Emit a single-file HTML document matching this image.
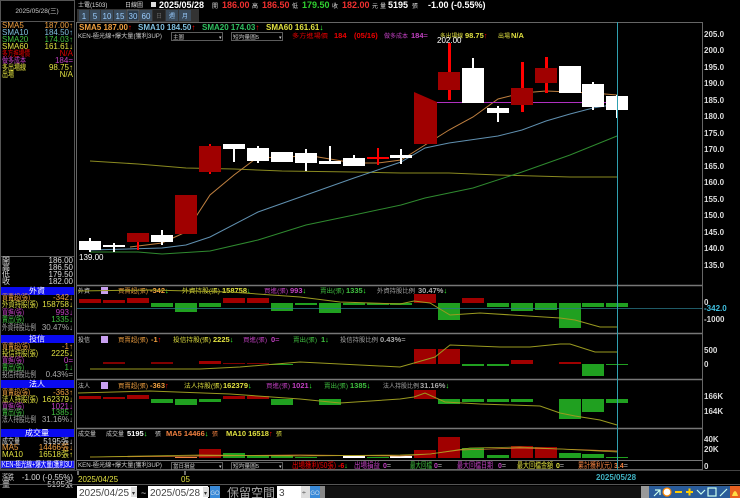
<!DOCTYPE html>
<html><head><meta charset="utf-8"><style>
body{margin:0;background:#000;width:740px;height:498px;overflow:hidden}
svg{display:block}
text{font-family:"Liberation Sans","Noto Sans CJK TC",sans-serif;font-size:8px}
.b{font-weight:bold}
.c{font-size:6px}
.v{font-size:7.5px;font-weight:bold}
</style></head><body>
<svg width="740" height="498" viewBox="0 0 740 498" xmlns="http://www.w3.org/2000/svg">
<rect width="740" height="498" fill="#000"/>
<!-- left panel frame -->
<rect x="0.5" y="0.5" width="74" height="469" fill="none" stroke="#555"/>
<line x1="0" y1="21.5" x2="75" y2="21.5" stroke="#555"/>
<text x="37" y="13" fill="#ccc" text-anchor="middle" style="font-size:6.5px">2025/05/28(三)</text>
<g style="font-size:6.5px">
<text x="2" y="28" fill="#f0a040">SMA5</text><text x="73" y="28" fill="#f0a040" text-anchor="end">187.00↑</text>
<text x="2" y="35" fill="#80c0e0">SMA10</text><text x="73" y="35" fill="#80c0e0" text-anchor="end">184.50↑</text>
<text x="2" y="42" fill="#40c040">SMA20</text><text x="73" y="42" fill="#40c040" text-anchor="end">174.03↑</text>
<text x="2" y="49" fill="#e0e040">SMA60</text><text x="73" y="49" fill="#e0e040" text-anchor="end">161.61↓</text>
<text x="2" y="56" fill="#e00000" textLength="28" lengthAdjust="spacingAndGlyphs">多方進場價</text><text x="73" y="56" fill="#e00000" text-anchor="end">N/A</text>
<text x="2" y="63" fill="#c040c0" textLength="24" lengthAdjust="spacingAndGlyphs">做多成本</text><text x="73" y="63" fill="#c040c0" text-anchor="end">184=</text>
<text x="2" y="70" fill="#e0e040" textLength="24" lengthAdjust="spacingAndGlyphs">多出場線</text><text x="73" y="70" fill="#e0e040" text-anchor="end">98.75↑</text>
<text x="2" y="77" fill="#e0e040" textLength="12" lengthAdjust="spacingAndGlyphs">出場</text><text x="73" y="77" fill="#e0e040" text-anchor="end">N/A</text>
</g>
<line x1="0" y1="256.5" x2="75" y2="256.5" stroke="#555"/>
<g style="font-size:6.5px" fill="#ddd">
<text x="2" y="263">開</text><text x="73" y="263" text-anchor="end">186.00</text>
<text x="2" y="270">高</text><text x="73" y="270" text-anchor="end">186.50</text>
<text x="2" y="277">低</text><text x="73" y="277" text-anchor="end">179.50</text>
<text x="2" y="284">收</text><text x="73" y="284" text-anchor="end">182.00</text>
</g>
<g style="font-size:6px">
<rect x="1" y="287" width="73" height="8" fill="#0a0af0"/>
<text x="37" y="293.5" fill="#fff" text-anchor="middle">外資</text>
<text x="2" y="300" fill="#f0a040" textLength="28" lengthAdjust="spacingAndGlyphs">買賣超(張)</text><text x="73" y="300" fill="#f0a040" text-anchor="end">-342↓</text>
<text x="2" y="307" fill="#e0e040" textLength="36" lengthAdjust="spacingAndGlyphs">外資持股(張)</text><text x="73" y="307" fill="#e0e040" text-anchor="end">158758↓</text>
<text x="2" y="315" fill="#c040c0" textLength="22" lengthAdjust="spacingAndGlyphs">買進(張)</text><text x="73" y="315" fill="#c040c0" text-anchor="end">993↓</text>
<text x="2" y="322" fill="#40c040" textLength="22" lengthAdjust="spacingAndGlyphs">賣出(張)</text><text x="73" y="322" fill="#40c040" text-anchor="end">1335↓</text>
<text x="2" y="330" fill="#aaa" textLength="34" lengthAdjust="spacingAndGlyphs">外資持股比例</text><text x="73" y="330" fill="#aaa" text-anchor="end">30.47%↓</text>

<rect x="1" y="335" width="73" height="8" fill="#0a0af0"/>
<text x="37" y="341.5" fill="#fff" text-anchor="middle">投信</text>
<text x="2" y="349" fill="#f0a040" textLength="28" lengthAdjust="spacingAndGlyphs">買賣超(張)</text><text x="73" y="349" fill="#f0a040" text-anchor="end">-1↑</text>
<text x="2" y="356" fill="#e0e040" textLength="36" lengthAdjust="spacingAndGlyphs">投信持股(張)</text><text x="73" y="356" fill="#e0e040" text-anchor="end">2225↓</text>
<text x="2" y="363" fill="#c040c0" textLength="22" lengthAdjust="spacingAndGlyphs">買進(張)</text><text x="73" y="363" fill="#c040c0" text-anchor="end">0=</text>
<text x="2" y="370" fill="#40c040" textLength="22" lengthAdjust="spacingAndGlyphs">賣出(張)</text><text x="73" y="370" fill="#40c040" text-anchor="end">1↓</text>
<text x="2" y="377" fill="#aaa" textLength="34" lengthAdjust="spacingAndGlyphs">投信持股比例</text><text x="73" y="377" fill="#aaa" text-anchor="end">0.43%=</text>

<rect x="1" y="380" width="73" height="8" fill="#0a0af0"/>
<text x="37" y="386.5" fill="#fff" text-anchor="middle">法人</text>
<text x="2" y="395" fill="#f0a040" textLength="28" lengthAdjust="spacingAndGlyphs">買賣超(張)</text><text x="73" y="395" fill="#f0a040" text-anchor="end">-363↑</text>
<text x="2" y="402" fill="#e0e040" textLength="36" lengthAdjust="spacingAndGlyphs">法人持股(張)</text><text x="73" y="402" fill="#e0e040" text-anchor="end">162379↓</text>
<text x="2" y="409" fill="#c040c0" textLength="22" lengthAdjust="spacingAndGlyphs">買進(張)</text><text x="73" y="409" fill="#c040c0" text-anchor="end">1021↓</text>
<text x="2" y="415" fill="#40c040" textLength="22" lengthAdjust="spacingAndGlyphs">賣出(張)</text><text x="73" y="415" fill="#40c040" text-anchor="end">1385↓</text>
<text x="2" y="422" fill="#aaa" textLength="34" lengthAdjust="spacingAndGlyphs">法人持股比例</text><text x="73" y="422" fill="#aaa" text-anchor="end">31.16%↓</text>

<rect x="1" y="429" width="73" height="8" fill="#0a0af0"/>
<text x="37" y="435.5" fill="#fff" text-anchor="middle">成交量</text>
<text x="2" y="444" fill="#ddd" textLength="18" lengthAdjust="spacingAndGlyphs">成交量</text><text x="73" y="444" fill="#ddd" text-anchor="end">5195張↓</text>
<text x="2" y="450" fill="#f0a040">MA5</text><text x="73" y="450" fill="#f0a040" text-anchor="end">14466張↓</text>
<text x="2" y="457" fill="#e0e040">MA10</text><text x="73" y="457" fill="#e0e040" text-anchor="end">16518張↑</text>
<rect x="1" y="461" width="73" height="7" fill="#0a0af0" stroke="#88f" stroke-width="0.5"/>
<text x="2" y="467" fill="#fff" textLength="70" lengthAdjust="spacingAndGlyphs">KEN-極光線+爆大量(獲利3U</text>
<text x="2" y="480" fill="#ddd" textLength="12" lengthAdjust="spacingAndGlyphs">漲跌</text><text x="73" y="480" fill="#ddd" text-anchor="end">-1.00 (-0.55%)</text>
<text x="2" y="487" fill="#ddd">量</text><text x="73" y="487" fill="#ddd" text-anchor="end">5195張</text>
</g>

<!-- top title -->
<text x="78" y="7" fill="#ddd" class="c">士電(1503)</text>
<text x="125" y="7" fill="#ddd" class="c">日線圖</text>
<rect x="151" y="2" width="5" height="5" fill="#ddd"/>
<text x="159" y="8" fill="#fff" class="b" style="font-size:9px">2025/05/28</text>
<text x="212" y="8" fill="#ddd" class="c">開</text><text x="222" y="8" fill="#f03030" class="b" style="font-size:9px">186.00</text>
<text x="252" y="8" fill="#ddd" class="c">高</text><text x="262" y="8" fill="#f03030" class="b" style="font-size:9px">186.50</text>
<text x="292" y="8" fill="#ddd" class="c">低</text><text x="302" y="8" fill="#30d030" class="b" style="font-size:9px">179.50</text>
<text x="332" y="8" fill="#ddd" class="c">收</text><text x="342" y="8" fill="#f03030" class="b" style="font-size:9px">182.00</text>
<text x="372" y="8" fill="#ddd" class="c">元</text>
<text x="380" y="8" fill="#ddd" class="c">量</text>
<text x="388" y="8" fill="#fff" class="b" style="font-size:9px">5195</text>
<text x="412" y="8" fill="#ddd" class="c">張</text>
<text x="428" y="8" fill="#fff" class="b" style="font-size:9px">-1.00 (-0.55%)</text>
<!-- buttons -->
<rect x="77" y="9" width="122" height="13" fill="#333"/>
<g style="font-size:8px" fill="#9cf">
<rect x="79" y="10" width="10" height="11" fill="#3a4a5a"/><text x="84" y="19" text-anchor="middle">1</text>
<rect x="90" y="10" width="10" height="11" fill="#3a4a5a"/><text x="95" y="19" text-anchor="middle">5</text>
<rect x="101" y="10" width="12" height="11" fill="#3a4a5a"/><text x="107" y="19" text-anchor="middle">10</text>
<rect x="114" y="10" width="12" height="11" fill="#3a4a5a"/><text x="120" y="19" text-anchor="middle">15</text>
<rect x="127" y="10" width="12" height="11" fill="#2a3a4a" stroke="#888" stroke-width="0.5"/><text x="133" y="19" text-anchor="middle">30</text>
<rect x="140" y="10" width="12" height="11" fill="#3a4a5a"/><text x="146" y="19" text-anchor="middle">60</text>
<rect x="153" y="10" width="12" height="11" fill="#222"/><text x="159" y="18" text-anchor="middle" fill="#666" class="c">日</text>
<rect x="166" y="10" width="12" height="11" fill="#3a4a5a"/><text x="172" y="18" text-anchor="middle" class="c">週</text>
<rect x="179" y="10" width="12" height="11" fill="#3a4a5a"/><text x="185" y="18" text-anchor="middle" class="c">月</text>
</g>

<!-- chart frame -->
<rect x="76.5" y="22.5" width="626" height="447" fill="none" stroke="#666"/>
<line x1="77" y1="285.5" x2="702" y2="285.5" stroke="#777" stroke-width="1.5"/>
<line x1="77" y1="333.5" x2="702" y2="333.5" stroke="#777" stroke-width="1.5"/>
<line x1="77" y1="379.5" x2="702" y2="379.5" stroke="#777" stroke-width="1.5"/>
<line x1="77" y1="428.5" x2="702" y2="428.5" stroke="#777" stroke-width="1.5"/>
<line x1="77" y1="460.5" x2="702" y2="460.5" stroke="#777" stroke-width="1"/>

<!-- main header -->
<g class="b" style="font-size:8px">
<text x="79" y="30" fill="#f0a040">SMA5 187.00<tspan fill="#f00">↑</tspan></text>
<text x="138" y="30" fill="#80c0e0">SMA10 184.50<tspan fill="#f00">↑</tspan></text>
<text x="202" y="30" fill="#30c060">SMA20 174.03<tspan fill="#f00">↑</tspan></text>
<text x="266" y="30" fill="#e0e040">SMA60 161.61<tspan fill="#3f3">↓</tspan></text>
</g>
<text x="78" y="38" fill="#ccc" class="c" textLength="84" lengthAdjust="spacingAndGlyphs">KEN-極光線+爆大量(獲利3UP)</text>
<rect x="171.5" y="32.5" width="51" height="8" fill="#000" stroke="#999" stroke-width="0.6"/>
<text x="173" y="39" fill="#ccc" style="font-size:5.5px">主圖</text><text x="219" y="39" fill="#ccc" style="font-size:5px">▾</text>
<rect x="231.5" y="32.5" width="51" height="8" fill="#000" stroke="#999" stroke-width="0.6"/>
<text x="233" y="39" fill="#ccc" style="font-size:5.5px" textLength="26" lengthAdjust="spacingAndGlyphs">短均量圖5</text><text x="279" y="39" fill="#ccc" style="font-size:5px">▾</text>
<text x="292" y="38" fill="#e00" class="c" textLength="36" lengthAdjust="spacingAndGlyphs">多方進場價</text><text x="334" y="38" fill="#e00" class="v">184</text><text x="354" y="38" fill="#e00" class="v">(05/16)</text>
<text x="384" y="38" fill="#c040c0" class="c" textLength="24" lengthAdjust="spacingAndGlyphs">做多成本</text><text x="411" y="38" fill="#c040c0" class="v">184<tspan font-weight="normal">=</tspan></text>
<text x="440" y="38" fill="#e0e040" class="c" textLength="23" lengthAdjust="spacingAndGlyphs">多出場線</text><text x="465" y="38" fill="#e0e040" class="v">98.75<tspan fill="#f00">↑</tspan></text>
<text x="498" y="38" fill="#e0e040" class="c">出場</text><text x="511" y="38" fill="#e0e040" class="v">N/A</text>

<!-- price axis -->
<g fill="#ddd" class="b" style="font-size:8px">
<text x="704" y="37">205.0</text><text x="704" y="53">200.0</text><text x="704" y="70">195.0</text>
<text x="704" y="86">190.0</text><text x="704" y="103">185.0</text><text x="704" y="119">180.0</text>
<text x="704" y="136">175.0</text><text x="704" y="152">170.0</text><text x="704" y="169">165.0</text>
<text x="704" y="185">160.0</text><text x="704" y="202">155.0</text><text x="704" y="218">150.0</text>
<text x="704" y="235">145.0</text><text x="704" y="251">140.0</text><text x="704" y="268">135.0</text>
</g>

<!-- MA lines -->
<polyline fill="none" stroke="#8a8a20" stroke-width="1" points="90,161 138,164 186,168 234,169 282,171 354,172 401,173 449,173 498,175 570,177 617,177"/>
<polyline fill="none" stroke="#2f8a2f" stroke-width="1" points="90,252 138,252 162,254 210,251 258,240 306,225 354,215 401,205 425,198 473,188 522,172 570,155 617,136"/>
<polyline fill="none" stroke="#6090b0" stroke-width="1" points="90,250 162,248 186,245 210,237 258,212 306,195 354,178 401,162 425,148 449,143 498,136 522,130 546,121 570,114 593,108 617,104"/>
<polyline fill="none" stroke="#c08040" stroke-width="1" points="130,247 162,243 186,232 210,195 234,175 258,157 282,158 306,155 330,159 354,163 378,163 401,160 425,145 449,130 473,117 498,99 522,93 546,91 570,92 593,93 617,95"/>
<line x1="437" y1="102.5" x2="617" y2="102.5" stroke="#b030c0" stroke-width="1"/>

<!-- candles -->
<g>
<rect x="89" y="238" width="2" height="14" fill="#fff"/><rect x="79" y="241" width="22" height="9" fill="#fff"/>
<rect x="113" y="243" width="2" height="9" fill="#fff"/><rect x="103" y="245" width="22" height="2" fill="#fff"/>
<rect x="137" y="233" width="2" height="17" fill="#f00"/><rect x="127" y="233" width="22" height="9" fill="#a00000"/>
<rect x="161" y="230" width="2" height="15" fill="#fff"/><rect x="151" y="235" width="22" height="7" fill="#fff"/>
<rect x="175" y="195" width="22" height="39" fill="#a00000"/>
<rect x="209" y="144" width="2" height="30" fill="#f00"/><rect x="199" y="146" width="22" height="26" fill="#a00000"/>
<rect x="233" y="144" width="2" height="18" fill="#fff"/><rect x="223" y="144" width="22" height="5" fill="#fff"/>
<rect x="257" y="146" width="2" height="17" fill="#fff"/><rect x="247" y="148" width="22" height="13" fill="#fff"/>
<rect x="271" y="152" width="22" height="10" fill="#fff"/>
<rect x="305" y="149" width="2" height="22" fill="#fff"/><rect x="295" y="153" width="22" height="10" fill="#fff"/>
<rect x="329" y="146" width="2" height="18" fill="#fff"/><rect x="319" y="161" width="22" height="3" fill="#fff"/>
<rect x="353" y="155" width="2" height="11" fill="#fff"/><rect x="343" y="158" width="22" height="8" fill="#fff"/>
<rect x="377" y="148" width="2" height="17" fill="#f00"/><rect x="367" y="157" width="22" height="2" fill="#f00"/>
<rect x="400" y="149" width="2" height="15" fill="#fff"/><rect x="390" y="155" width="22" height="3" fill="#fff"/>
<polygon points="414,92 437,102 437,144 414,144" fill="#a00000"/>
<rect x="448" y="43" width="3" height="57" fill="#f00"/><rect x="438" y="72" width="22" height="18" fill="#a00000"/>
<rect x="472" y="58" width="2" height="45" fill="#fff"/><rect x="462" y="68" width="22" height="35" fill="#fff"/>
<rect x="497" y="106" width="2" height="16" fill="#fff"/><rect x="487" y="108" width="22" height="5" fill="#fff"/>
<rect x="521" y="62" width="3" height="50" fill="#f00"/><rect x="511" y="88" width="22" height="17" fill="#a00000"/>
<rect x="545" y="57" width="3" height="36" fill="#f00"/><rect x="535" y="68" width="22" height="15" fill="#a00000"/>
<rect x="559" y="66" width="22" height="27" fill="#fff"/>
<rect x="592" y="82" width="2" height="28" fill="#fff"/><rect x="582" y="84" width="22" height="23" fill="#fff"/>
<rect x="616" y="95" width="2" height="23" fill="#fff"/><rect x="606" y="96" width="22" height="14" fill="#fff"/>
</g>
<text x="79" y="260" fill="#fff" style="font-size:8px">139.00</text>
<text x="437" y="43" fill="#fff" style="font-size:8px">202.00</text>

<!-- foreign panel -->
<text x="78" y="293" fill="#ccc" class="c">外資</text>
<rect x="101" y="287" width="7" height="7" fill="#c8a0f0"/>
<text x="118" y="293" fill="#f0a040" class="c" textLength="30" lengthAdjust="spacingAndGlyphs">買賣超(張)</text><text x="150" y="293" fill="#f0a040" class="v">-342<tspan fill="#3f3">↓</tspan></text>
<text x="182" y="293" fill="#e0e040" class="c" textLength="38" lengthAdjust="spacingAndGlyphs">外資持股(張)</text><text x="222" y="293" fill="#e0e040" class="v">158758<tspan fill="#3f3">↓</tspan></text>
<text x="264" y="293" fill="#c040c0" class="c" textLength="24" lengthAdjust="spacingAndGlyphs">買進(張)</text><text x="290" y="293" fill="#c040c0" class="v">993<tspan fill="#3f3">↓</tspan></text>
<text x="320" y="293" fill="#40c040" class="c" textLength="24" lengthAdjust="spacingAndGlyphs">賣出(張)</text><text x="346" y="293" fill="#40c040" class="v">1335<tspan fill="#3f3">↓</tspan></text>
<text x="377" y="293" fill="#aaa" class="c" textLength="38" lengthAdjust="spacingAndGlyphs">外資持股比例</text><text x="418" y="293" fill="#aaa" class="v">30.47%<tspan fill="#3f3">↓</tspan></text>
<g>
<rect x="79" y="299" width="22" height="4" fill="#a00000"/>
<rect x="103" y="300" width="22" height="3" fill="#a00000"/>
<rect x="127" y="298" width="22" height="5" fill="#a00000"/>
<rect x="151" y="303" width="22" height="4" fill="#20a020"/>
<rect x="175" y="303" width="22" height="9" fill="#20a020"/>
<rect x="199" y="303" width="22" height="4" fill="#20a020"/>
<rect x="223" y="298" width="22" height="5" fill="#a00000"/>
<rect x="247" y="298" width="22" height="5" fill="#a00000"/>
<rect x="271" y="303" width="22" height="8" fill="#20a020"/>
<rect x="295" y="303" width="22" height="2" fill="#20a020"/>
<rect x="319" y="303" width="22" height="10" fill="#20a020"/>
<rect x="343" y="303" width="22" height="2" fill="#20a020"/>
<rect x="367" y="303" width="22" height="2" fill="#20a020"/>
<rect x="390" y="303" width="22" height="2" fill="#20a020"/>
<rect x="414" y="294" width="22" height="9" fill="#a00000"/>
<rect x="438" y="303" width="22" height="17" fill="#20a020"/>
<rect x="462" y="298" width="22" height="5" fill="#a00000"/>
<rect x="487" y="303" width="22" height="4" fill="#20a020"/>
<rect x="511" y="303" width="22" height="8" fill="#20a020"/>
<rect x="535" y="303" width="22" height="7" fill="#20a020"/>
<rect x="559" y="303" width="22" height="25" fill="#20a020"/>
<rect x="582" y="303" width="22" height="4" fill="#20a020"/>
<rect x="606" y="303" width="22" height="4" fill="#20a020"/>
</g>
<line x1="77" y1="308.5" x2="702" y2="308.5" stroke="#2a7a8a" stroke-width="0.8"/>
<polyline fill="none" stroke="#9a9a20" stroke-width="1" points="78,291 150,290 230,292 300,297 340,302 400,304 414,301 430,303 450,315 480,313 560,318 575,320 600,327 617,327"/>
<g fill="#ddd" class="b" style="font-size:8px"><text x="704" y="305">0</text><text x="704" y="322">-1000</text></g>
<text x="704" y="311" fill="#40c0e0" class="b" style="font-size:8px">-342.0</text>

<!-- 投信 panel -->
<text x="78" y="342" fill="#ccc" class="c">投信</text>
<rect x="101" y="336" width="7" height="7" fill="#c8a0f0"/>
<text x="118" y="342" fill="#f0a040" class="c" textLength="30" lengthAdjust="spacingAndGlyphs">買賣超(張)</text><text x="151" y="342" fill="#f0a040" class="v">-1<tspan fill="#f00">↑</tspan></text>
<text x="173" y="342" fill="#e0e040" class="c" textLength="38" lengthAdjust="spacingAndGlyphs">投信持股(張)</text><text x="213" y="342" fill="#e0e040" class="v">2225<tspan fill="#3f3">↓</tspan></text>
<text x="243" y="342" fill="#c040c0" class="c" textLength="24" lengthAdjust="spacingAndGlyphs">買進(張)</text><text x="271" y="342" fill="#c040c0" class="v">0<tspan font-weight="normal">=</tspan></text>
<text x="293" y="342" fill="#40c040" class="c" textLength="24" lengthAdjust="spacingAndGlyphs">賣出(張)</text><text x="321" y="342" fill="#40c040" class="v">1<tspan fill="#3f3">↓</tspan></text>
<text x="340" y="342" fill="#aaa" class="c" textLength="38" lengthAdjust="spacingAndGlyphs">投信持股比例</text><text x="380" y="342" fill="#aaa" class="v">0.43%<tspan font-weight="normal">=</tspan></text>
<g>
<rect x="103" y="362" width="22" height="2" fill="#800000"/>
<rect x="151" y="362" width="22" height="2" fill="#800000"/>
<rect x="199" y="361" width="22" height="3" fill="#a00000"/>
<rect x="223" y="363" width="22" height="1" fill="#800000"/>
<rect x="247" y="363" width="22" height="1" fill="#800000"/>
<rect x="271" y="364" width="22" height="1" fill="#20a020"/>
<rect x="414" y="349" width="22" height="15" fill="#a00000"/>
<rect x="438" y="349" width="22" height="15" fill="#a00000"/>
<rect x="462" y="364" width="22" height="2" fill="#20a020"/>
<rect x="487" y="364" width="22" height="2" fill="#20a020"/>
<rect x="511" y="360" width="22" height="4" fill="#a00000"/>
<rect x="559" y="362" width="22" height="2" fill="#a00000"/>
<rect x="582" y="364" width="22" height="12" fill="#20a020"/>
<rect x="606" y="364" width="22" height="1" fill="#20a020"/>
</g>
<polyline fill="none" stroke="#9a9a20" stroke-width="1" points="90,369 200,369 240,367 300,362 400,367 435,357 450,345 500,347 530,347 560,344 570,344 595,352 617,352"/>
<g fill="#ddd" class="b" style="font-size:8px"><text x="704" y="353">500</text><text x="704" y="367">0</text></g>

<!-- 法人 panel -->
<text x="78" y="388" fill="#ccc" class="c">法人</text>
<rect x="101" y="382" width="7" height="7" fill="#c8a0f0"/>
<text x="118" y="388" fill="#f0a040" class="c" textLength="30" lengthAdjust="spacingAndGlyphs">買賣超(張)</text><text x="150" y="388" fill="#f0a040" class="v">-363<tspan fill="#f00">↑</tspan></text>
<text x="184" y="388" fill="#e0e040" class="c" textLength="38" lengthAdjust="spacingAndGlyphs">法人持股(張)</text><text x="223" y="388" fill="#e0e040" class="v">162379<tspan fill="#3f3">↓</tspan></text>
<text x="266" y="388" fill="#c040c0" class="c" textLength="24" lengthAdjust="spacingAndGlyphs">買進(張)</text><text x="292" y="388" fill="#c040c0" class="v">1021<tspan fill="#3f3">↓</tspan></text>
<text x="324" y="388" fill="#40c040" class="c" textLength="24" lengthAdjust="spacingAndGlyphs">賣出(張)</text><text x="350" y="388" fill="#40c040" class="v">1385<tspan fill="#3f3">↓</tspan></text>
<text x="383" y="388" fill="#aaa" class="c" textLength="36" lengthAdjust="spacingAndGlyphs">法人持股比例</text><text x="420" y="388" fill="#aaa" class="v">31.16%<tspan fill="#3f3">↓</tspan></text>
<g>
<rect x="79" y="396" width="22" height="3" fill="#a00000"/>
<rect x="103" y="397" width="22" height="2" fill="#a00000"/>
<rect x="127" y="395" width="22" height="4" fill="#a00000"/>
<rect x="151" y="399" width="22" height="4" fill="#20a020"/>
<rect x="175" y="399" width="22" height="6" fill="#20a020"/>
<rect x="199" y="399" width="22" height="3" fill="#20a020"/>
<rect x="223" y="396" width="22" height="3" fill="#a00000"/>
<rect x="247" y="396" width="22" height="3" fill="#a00000"/>
<rect x="271" y="399" width="22" height="6" fill="#20a020"/>
<rect x="319" y="399" width="22" height="6" fill="#20a020"/>
<rect x="414" y="390" width="22" height="9" fill="#a00000"/>
<rect x="438" y="399" width="22" height="5" fill="#20a020"/>
<rect x="462" y="399" width="22" height="3" fill="#20a020"/>
<rect x="487" y="399" width="22" height="3" fill="#20a020"/>
<rect x="511" y="399" width="22" height="3" fill="#20a020"/>
<rect x="559" y="399" width="22" height="20" fill="#20a020"/>
<rect x="582" y="399" width="22" height="13" fill="#20a020"/>
<rect x="606" y="399" width="22" height="4" fill="#20a020"/>
</g>
<polyline fill="none" stroke="#9a9a20" stroke-width="1" points="78,393 150,391 230,394 300,399 340,403 400,399 414,397 425,393 445,402 480,404 540,406 560,413 575,416 600,420 617,425"/>
<g fill="#ddd" class="b" style="font-size:8px"><text x="704" y="399">166K</text><text x="704" y="414">164K</text></g>

<!-- volume panel -->
<text x="78" y="436" fill="#ccc" class="c" textLength="18" lengthAdjust="spacingAndGlyphs">成交量</text>
<text x="106" y="436" fill="#ccc" class="c" textLength="18" lengthAdjust="spacingAndGlyphs">成交量</text><text x="127" y="436" fill="#fff" class="v">5195<tspan fill="#3f3">↓</tspan></text><text x="155" y="436" fill="#ccc" class="c">張</text>
<text x="166" y="436" fill="#f08040" class="v">MA5 14466<tspan fill="#3f3">↓</tspan></text><text x="212" y="436" fill="#f08040" class="c">張</text>
<text x="226" y="436" fill="#e0e040" class="v">MA10 16518<tspan fill="#f00">↑</tspan></text><text x="276" y="436" fill="#e0e040" class="c">張</text>
<g>
<rect x="175" y="457" width="22" height="1" fill="#f08040"/>
<rect x="199" y="449" width="22" height="9" fill="#a00000"/>
<rect x="223" y="453" width="22" height="5" fill="#20a020"/>
<rect x="247" y="456" width="22" height="2" fill="#20a020"/>
<rect x="271" y="456" width="22" height="2" fill="#20a020"/>
<rect x="295" y="457" width="22" height="1" fill="#20a020"/>
<rect x="343" y="456" width="22" height="2" fill="#fff"/>
<rect x="367" y="457" width="22" height="1" fill="#20a020"/>
<rect x="390" y="456" width="22" height="2" fill="#fff"/>
<rect x="414" y="450" width="22" height="8" fill="#a00000"/>
<rect x="438" y="437" width="22" height="21" fill="#a00000"/>
<rect x="462" y="448" width="22" height="10" fill="#20a020"/>
<rect x="487" y="455" width="22" height="3" fill="#20a020"/>
<rect x="511" y="446" width="22" height="12" fill="#a00000"/>
<rect x="535" y="447" width="22" height="11" fill="#a00000"/>
<rect x="559" y="453" width="22" height="5" fill="#20a020"/>
<rect x="582" y="454" width="22" height="4" fill="#20a020"/>
<rect x="606" y="457" width="22" height="1" fill="#20a020"/>
</g>
<polyline fill="none" stroke="#e08030" stroke-width="0.8" points="90,457 200,456 300,455 400,456 430,454 460,450 520,448 560,449 617,451"/>
<polyline fill="none" stroke="#a0a020" stroke-width="0.8" points="90,457 200,455 300,456 400,455 430,454 470,448 520,447 560,449 617,452"/>
<g fill="#ddd" class="b" style="font-size:8px"><text x="704" y="442">40K</text><text x="704" y="452">20K</text><text x="704" y="469">0</text></g>

<!-- bottom info bar -->
<text x="78" y="467" fill="#ccc" class="c" textLength="84" lengthAdjust="spacingAndGlyphs">KEN-極光線+爆大量(獲利3UP)</text>
<rect x="171.5" y="462.5" width="51" height="7" fill="#000" stroke="#999" stroke-width="0.6"/>
<text x="173" y="468" fill="#ccc" style="font-size:5.5px" textLength="22" lengthAdjust="spacingAndGlyphs">當日損益</text><text x="219" y="468" fill="#ccc" style="font-size:5px">▾</text>
<rect x="231.5" y="462.5" width="51" height="7" fill="#000" stroke="#999" stroke-width="0.6"/>
<text x="233" y="468" fill="#ccc" style="font-size:5.5px" textLength="26" lengthAdjust="spacingAndGlyphs">短均量圖5</text><text x="279" y="468" fill="#ccc" style="font-size:5px">▾</text>
<g style="font-size:5.5px">
<text x="292" y="468" fill="#e00" textLength="44" lengthAdjust="spacingAndGlyphs">出場獲利(50張)</text><text x="338" y="468" fill="#e00" class="b" style="font-size:7px">-6<tspan fill="#3f3">↓</tspan></text>
<text x="354" y="468" fill="#c040c0" textLength="26" lengthAdjust="spacingAndGlyphs">出場損益</text><text x="383" y="468" fill="#c040c0" class="b" style="font-size:7px">0<tspan fill="#888">=</tspan></text>
<text x="410" y="468" fill="#40c040" textLength="22" lengthAdjust="spacingAndGlyphs">最大回檔</text><text x="434" y="468" fill="#c040c0" class="b" style="font-size:7px">0<tspan fill="#888">=</tspan></text>
<text x="457" y="468" fill="#c040c0" textLength="36" lengthAdjust="spacingAndGlyphs">最大回檔日期</text><text x="498" y="468" fill="#c040c0" class="b" style="font-size:7px">0<tspan fill="#888">=</tspan></text>
<text x="517" y="468" fill="#e0e040" textLength="36" lengthAdjust="spacingAndGlyphs">最大回檔金額</text><text x="556" y="468" fill="#e0e040" class="b" style="font-size:7px">0<tspan fill="#888">=</tspan></text>
<text x="578" y="468" fill="#f08040" textLength="34" lengthAdjust="spacingAndGlyphs">累計獲利(元)</text><text x="614" y="468" fill="#f08040" class="b" style="font-size:7px">3.4<tspan fill="#888">=</tspan></text>
</g>
<!-- cursor -->
<line x1="617.5" y1="22" x2="617.5" y2="470" stroke="#30a0b0" stroke-width="1"/>

<!-- date axis -->
<line x1="0" y1="470.5" x2="740" y2="470.5" stroke="#444"/>
<line x1="78" y1="471" x2="78" y2="475" stroke="#ddd"/>
<line x1="185" y1="471" x2="185" y2="475" stroke="#ddd"/>
<text x="78" y="482" fill="#e0e040" style="font-size:8px">2025/04/25</text>
<text x="181" y="482" fill="#e0e040" style="font-size:8px">05</text>
<text x="596" y="480" fill="#40b0c0" class="b" style="font-size:8px">2025/05/28</text>

<!-- bottom controls -->
<line x1="0" y1="484.5" x2="740" y2="484.5" stroke="#555"/>
<rect x="77" y="486" width="60" height="12" fill="#fff"/>
<text x="79" y="496" fill="#444" style="font-size:10px">2025/04/25</text>
<rect x="131" y="487" width="6" height="10" fill="#ddd"/><text x="132" y="495" fill="#333" style="font-size:6px">▾</text>
<text x="141" y="496" fill="#ccc" style="font-size:9px">~</text>
<rect x="148" y="486" width="60" height="12" fill="#fff"/>
<text x="150" y="496" fill="#444" style="font-size:10px">2025/05/28</text>
<rect x="203" y="487" width="6" height="10" fill="#ddd"/><text x="204" y="495" fill="#333" style="font-size:6px">▾</text>
<rect x="210" y="486" width="10" height="12" fill="#3a8ad8"/><text x="215" y="495" fill="#cde" text-anchor="middle" style="font-size:6px">GO</text>
<text x="227" y="497" fill="#aaa" style="font-size:12px">保留空間</text>
<rect x="277" y="486" width="24" height="12" fill="#fff"/><text x="279" y="496" fill="#444" style="font-size:10px">3</text>
<rect x="301" y="486" width="9" height="12" fill="#ddd"/><text x="302" y="495" fill="#333" style="font-size:7px">÷</text>
<rect x="310" y="486" width="10" height="12" fill="#3a8ad8"/><text x="315" y="495" fill="#cde" text-anchor="middle" style="font-size:6px">GO</text>
<rect x="320" y="486" width="5" height="12" fill="#888"/>
<rect x="325" y="486" width="316" height="12" fill="#111"/>
<rect x="641" y="486" width="8" height="12" fill="#999"/>
<rect x="649" y="486" width="91" height="12" fill="#2a5c9a"/>
<g stroke="#cfe" stroke-width="1.2" fill="none">
<path d="M654 496 L660 490 M655 490 L660 490 L660 495"/>
<circle cx="667" cy="492" r="4" fill="#fff" stroke="#f80"/>
<path d="M675 492 H682" stroke="#fc0" stroke-width="2"/>
<path d="M686 492 H693 M689.5 488.5 V495.5" stroke="#fc0" stroke-width="2"/>
<path d="M697 490 L701 494 L705 490"/>
<rect x="708" y="488" width="8" height="8"/>
<path d="M720 496 L727 489"/>
</g>
<rect x="730" y="486" width="10" height="12" fill="#e86020"/>
<path d="M732 496 Q735 486 738 496 Z" fill="#fd4"/>
</svg>
</body></html>
